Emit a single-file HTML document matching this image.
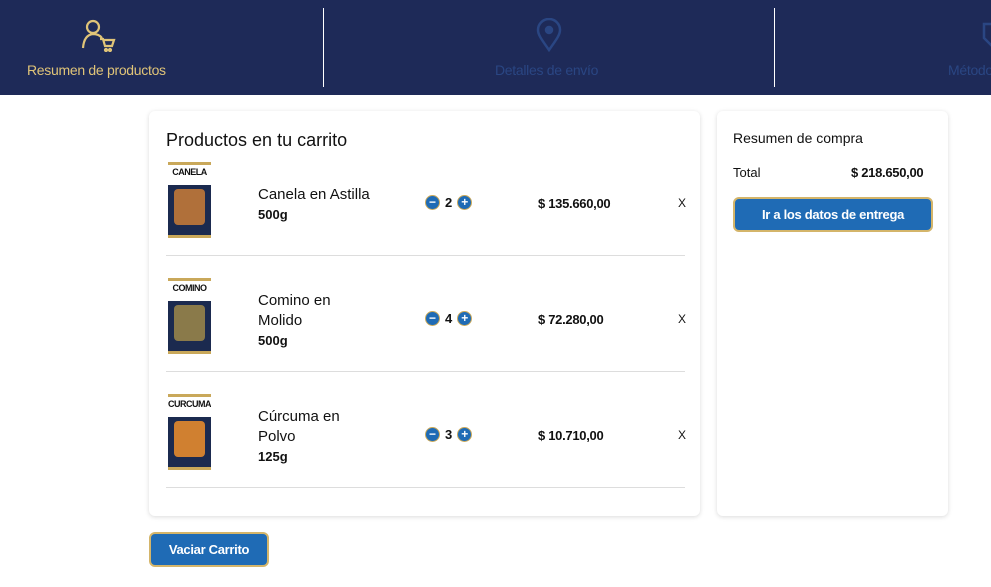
<!DOCTYPE html>
<html><head><style>
body{margin:0;width:991px;height:587px;background:#fff;font-family:"Liberation Sans",sans-serif;position:relative;overflow:hidden;color:#111}
.hd{position:absolute;left:0;top:0;width:991px;height:95px;background:#1e2a58}
.sep{position:absolute;top:8px;width:1px;height:79px;background:#fff}
.lbl{position:absolute;top:62px;font-size:14px;white-space:nowrap;letter-spacing:-0.3px}
.card{position:absolute;background:#fff;border-radius:6px;box-shadow:0 1px 5px rgba(0,0,0,.15)}
.row{position:absolute;left:166px;width:519px;height:116px;border-bottom:1px solid #ddd}
.img{position:absolute;left:2px;width:43px;height:76px;background:#1b2a4f;border-top:3px solid #c9a85a;border-bottom:3px solid #c9a85a;box-sizing:border-box;overflow:hidden}
.img .t{background:#fff;height:20px;font-size:9px;text-align:center;font-weight:bold;line-height:14px;color:#111;letter-spacing:-0.5px;white-space:nowrap;overflow:hidden}
.img .b{position:absolute;left:6px;top:24px;width:31px;height:36px;background:#b0703a;border-radius:4px}
.name{position:absolute;left:92px;font-size:15px;line-height:20px}
.name b{display:block;font-size:13px}
.qty{position:absolute;left:259px;font-size:13px;font-weight:bold;display:flex;align-items:center;gap:5px}
.c{width:13px;height:13px;border-radius:50%;background:#1f6bb5;border:1px solid #c9a85a;color:#fff;font-size:12px;line-height:12px;text-align:center}
.pr{position:absolute;left:372px;font-size:13px;font-weight:bold;letter-spacing:-0.3px}
.x{position:absolute;left:512px;font-size:12px}
.btn{position:absolute;background:#1f6bb5;color:#fff;border:2px solid #d4b56a;border-radius:6px;font-weight:bold;font-size:13px;text-align:center;box-sizing:border-box;letter-spacing:-0.3px}
</style></head><body>
<div class="hd">
<svg style="position:absolute;left:80px;top:18px" width="38" height="34" viewBox="0 0 38 34" fill="none" stroke="#e0c478" stroke-width="2.2"><circle cx="13" cy="9" r="6"/><path d="M3 30 Q4 17 13 16 Q19 16 22 20"/><path d="M20 21h3l2 7h7l2-6h-10"/><circle cx="26" cy="32" r="1"/><circle cx="30" cy="32" r="1"/></svg>
<div class="lbl" style="left:27px;color:#e0c478">Resumen de productos</div>
<div class="sep" style="left:323px"></div>
<svg style="position:absolute;left:536px;top:18px" width="26" height="34" viewBox="0 0 26 34" fill="none" stroke="#2a4683" stroke-width="2.5"><path d="M13 32 C6 22 2 17 2 12 A11 11 0 0 1 24 12 C24 17 20 22 13 32Z"/><circle cx="13" cy="12" r="3" fill="#2a4683"/></svg>
<div class="lbl" style="left:495px;color:#2a4683">Detalles de envío</div>
<div class="sep" style="left:774px"></div>
<svg style="position:absolute;left:982px;top:20px" width="20" height="30" viewBox="0 0 20 30" fill="none" stroke="#2a4683" stroke-width="2.5"><path d="M2 4h16v14l-8 8-8-8z"/></svg>
<div class="lbl" style="left:948px;color:#2a4683">Método</div>
</div>

<div class="card" style="left:149px;top:111px;width:551px;height:405px"></div>
<div style="position:absolute;left:166px;top:130px;font-size:18px">Productos en tu carrito</div>

<div class="row" style="top:139px">
<div class="img" style="top:23px"><div class="t">CANELA</div><div class="b"></div></div>
<div class="name" style="top:46px">Canela en Astilla<b>500g</b></div>
<div class="qty" style="top:56px"><span class="c">−</span>2<span class="c">+</span></div>
<div class="pr" style="top:57px">$ 135.660,00</div><div class="x" style="top:57px">X</div>
</div>
<div class="row" style="top:255px">
<div class="img" style="top:23px"><div class="t">COMINO</div><div class="b" style="background:#8a7a4a"></div></div>
<div class="name" style="top:36px">Comino en<br>Molido<b>500g</b></div>
<div class="qty" style="top:56px"><span class="c">−</span>4<span class="c">+</span></div>
<div class="pr" style="top:57px">$ 72.280,00</div><div class="x" style="top:57px">X</div>
</div>
<div class="row" style="top:371px">
<div class="img" style="top:23px"><div class="t">CURCUMA</div><div class="b" style="background:#d08030"></div></div>
<div class="name" style="top:36px">Cúrcuma en<br>Polvo<b>125g</b></div>
<div class="qty" style="top:56px"><span class="c">−</span>3<span class="c">+</span></div>
<div class="pr" style="top:57px">$ 10.710,00</div><div class="x" style="top:57px">X</div>
</div>

<div class="card" style="left:717px;top:111px;width:231px;height:405px"></div>
<div style="position:absolute;left:733px;top:130px;font-size:14px">Resumen de compra</div>
<div style="position:absolute;left:733px;top:165px;font-size:13px">Total</div>
<div style="position:absolute;left:851px;top:165px;font-size:13px;font-weight:bold;letter-spacing:-0.3px">$ 218.650,00</div>
<div class="btn" style="left:733px;top:197px;width:200px;height:35px;line-height:31px">Ir a los datos de entrega</div>
<div class="btn" style="left:149px;top:532px;width:120px;height:35px;line-height:31px">Vaciar Carrito</div>
</body></html>
